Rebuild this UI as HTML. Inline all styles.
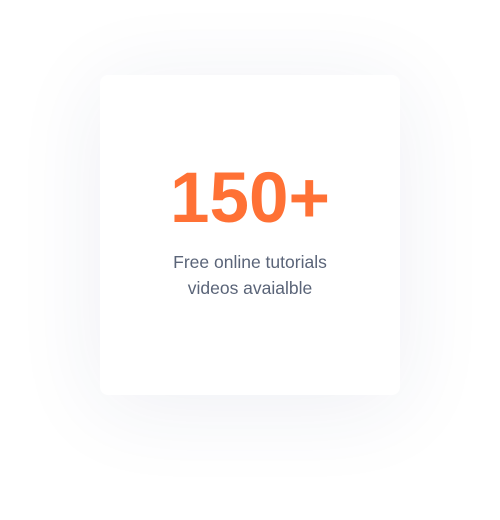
<!DOCTYPE html>
<html><head><style>
html,body{margin:0;padding:0;background:#fff;width:500px;height:520px;overflow:hidden}
.card{position:absolute;left:100px;top:75px;width:300px;height:320px;background:#fff;border-radius:8px;
box-shadow:0 10px 90px rgba(40,50,110,0.08);text-align:center;font-family:"Liberation Sans",sans-serif}
.num{position:absolute;left:0;right:0;font-size:71px;font-weight:bold;color:#ff7135;line-height:70px}
.txt{position:absolute;left:0;right:0;font-size:17.5px;color:#5a6478;line-height:26px}
</style></head><body>
<div class="card">
<div class="num" style="top:89px">150+</div>
<div class="txt" style="top:174px">Free online tutorials<br>videos avaialble</div>
</div>
</body></html>
